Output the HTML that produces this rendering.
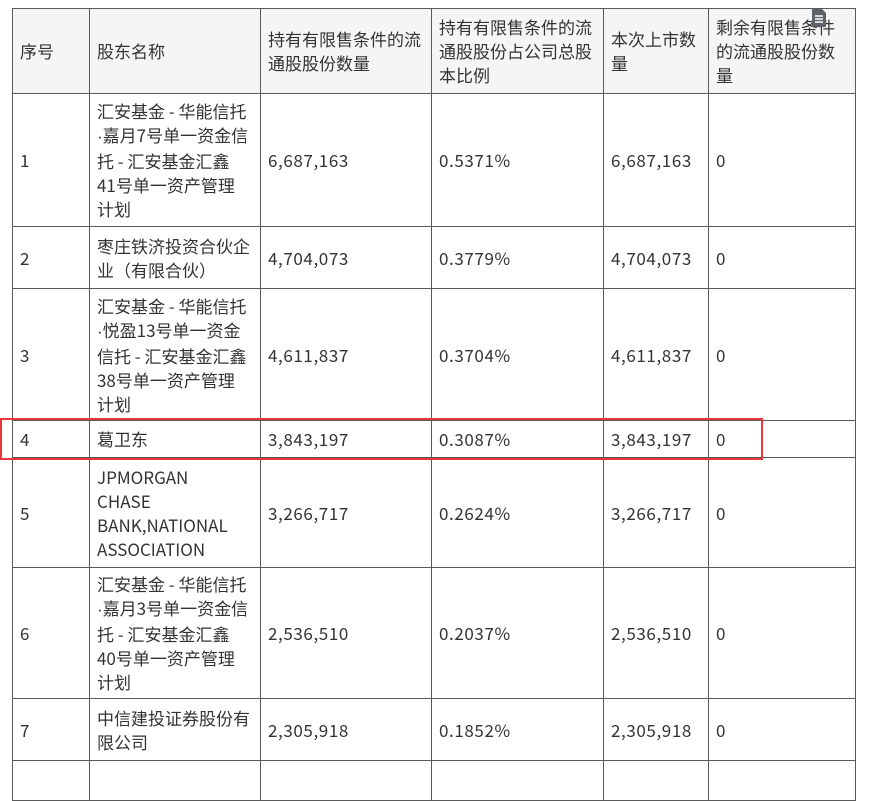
<!DOCTYPE html>
<html><head><meta charset="utf-8">
<style>
html,body{margin:0;padding:0;background:#fff;width:870px;height:764px;overflow:hidden;}
body{font-family:"Noto Sans CJK SC","Liberation Sans",sans-serif;color:#333;font-size:17px;}
table{position:absolute;left:12px;top:8px;border-collapse:collapse;table-layout:fixed;width:843px;}
td,th{border:1px solid #5a5a5a;padding:0 4px 0 7px;line-height:24px;text-align:left;vertical-align:middle;font-weight:normal;white-space:nowrap;overflow:hidden;}
th{background:#f5f5f5;}
.n{letter-spacing:0.6px;}
.d{font-family:"Liberation Sans",sans-serif;}
.hl{position:absolute;left:0;top:418px;width:759px;height:38px;border:2px solid #e8383d;}
.icon{position:absolute;left:811px;top:8px;width:16px;height:20px;}
</style></head><body>
<table>
<colgroup><col style="width:77px"><col style="width:171px"><col style="width:171px"><col style="width:172px"><col style="width:105px"><col style="width:147px"></colgroup>
<tr style="height:85px"><th>序号</th><th>股东名称</th><th>持有有限售条件的流<br>通股股份数量</th><th>持有有限售条件的流<br>通股股份占公司总股<br>本比例</th><th>本次上市数<br>量</th><th>剩余有限售条件<br>的流通股股份数<br>量</th></tr>
<tr style="height:133px"><td>1</td><td>汇安基金 - 华能信托<br><span class="d">·</span>嘉月7号单一资金信<br>托 - 汇安基金汇鑫<br>41号单一资产管理<br>计划</td><td class="n">6,687,163</td><td class="n">0.5371%</td><td class="n">6,687,163</td><td>0</td></tr>
<tr style="height:62px"><td>2</td><td>枣庄铁济投资合伙企<br>业（有限合伙）</td><td class="n">4,704,073</td><td class="n">0.3779%</td><td class="n">4,704,073</td><td>0</td></tr>
<tr style="height:132px"><td>3</td><td>汇安基金 - 华能信托<br><span class="d">·</span>悦盈13号单一资金<br>信托 - 汇安基金汇鑫<br>38号单一资产管理<br>计划</td><td class="n">4,611,837</td><td class="n">0.3704%</td><td class="n">4,611,837</td><td>0</td></tr>
<tr style="height:37px"><td>4</td><td>葛卫东</td><td class="n">3,843,197</td><td class="n">0.3087%</td><td class="n">3,843,197</td><td>0</td></tr>
<tr style="height:110px"><td>5</td><td>JPMORGAN<br>CHASE<br>BANK,NATIONAL<br>ASSOCIATION</td><td class="n">3,266,717</td><td class="n">0.2624%</td><td class="n">3,266,717</td><td>0</td></tr>
<tr style="height:131px"><td>6</td><td>汇安基金 - 华能信托<br><span class="d">·</span>嘉月3号单一资金信<br>托 - 汇安基金汇鑫<br>40号单一资产管理<br>计划</td><td class="n">2,536,510</td><td class="n">0.2037%</td><td class="n">2,536,510</td><td>0</td></tr>
<tr style="height:62px"><td>7</td><td>中信建投证券股份有<br>限公司</td><td class="n">2,305,918</td><td class="n">0.1852%</td><td class="n">2,305,918</td><td>0</td></tr>
<tr style="height:40px"><td></td><td></td><td></td><td></td><td></td><td></td></tr>
</table>
<div class="hl"></div>
<svg class="icon" viewBox="0 0 16 20"><path d="M1 1h10l4 4v14H1z" fill="#5f6368"/><path d="M4 8h8M4 11h8M4 14h8" stroke="#fff" stroke-width="1.5"/></svg>
</body></html>
